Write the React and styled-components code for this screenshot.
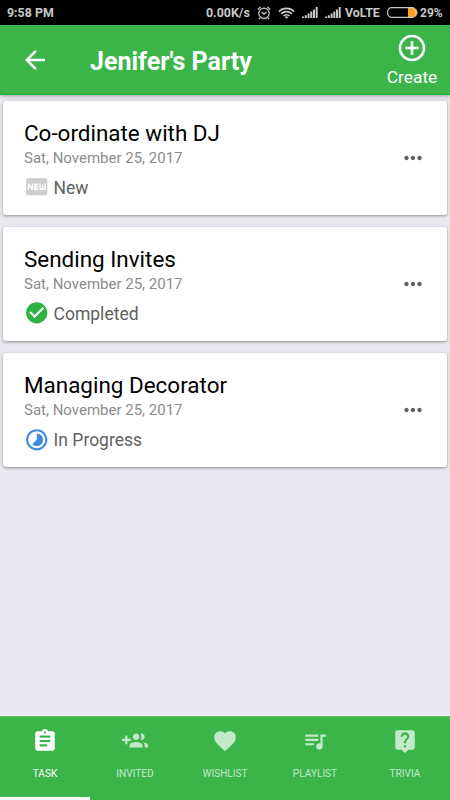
import styled, { createGlobalStyle } from "styled-components";
import {
    MdArrowBack,
    MdAddCircleOutline,
    MdMoreHoriz,
    MdFiberNew,
    MdCheckCircle,
    MdTimelapse,
    MdAssignment,
    MdFavorite,
    MdQueueMusic,
    MdLiveHelp,
} from "react-icons/md";

const GroupAddIcon = ({ size }) => (
    <svg width={size} height={size} viewBox="0 0 24 24" fill="currentColor">
        <path d="M8 10H5V7H3v3H0v2h3v3h2v-3h3v-2zm10 1c1.66 0 2.99-1.34 2.99-3S19.66 5 18 5c-.32 0-.63.05-.91.14.57.81.9 1.79.9 2.86s-.34 2.04-.9 2.86c.28.09.59.14.91.14zm-5 0c1.66 0 2.99-1.34 2.99-3S14.66 5 13 5c-1.66 0-3 1.34-3 3s1.34 3 3 3zm6.62 2.16c.83.73 1.38 1.66 1.38 2.84v2h3v-2c0-1.54-2.37-2.49-4.38-2.84zM13 13c-2 0-6 1-6 3v2h12v-2c0-2-4-3-6-3z" />
    </svg>
);

const AlarmIcon = () => (
    <svg width="14" height="14" viewBox="0 0 14 14" fill="none" stroke="currentColor" strokeWidth="1.3">
        <circle cx="7" cy="7.3" r="5.2" />
        <path d="M.7 3.4 3.6.9M13.3 3.4 10.4.9M4.7 6 7 8.1 9.4 6M3 11.8l-1 1.3M11 11.8l1 1.3" />
    </svg>
);

const WifiIcon = () => (
    <svg width="17" height="12" viewBox="0 0 17 12" fill="none" stroke="currentColor" strokeWidth="1.7">
        <path d="M.8 4.5a10.9 10.9 0 0 1 15.4 0M3.2 6.8a7.5 7.5 0 0 1 10.6 0M5.5 9a4.2 4.2 0 0 1 6 0" />
        <path d="M8.5 11.8 6.7 10a2.6 2.6 0 0 1 3.6 0z" fill="currentColor" stroke="none" />
    </svg>
);

const SignalIcon = () => (
    <svg width="16" height="11" viewBox="0 0 16 11" fill="currentColor">
        <path d="M0 9.5h2V11H0zM2.8 8.3h2V11h-2zM5.6 6.5h2V11h-2zM8.3 4.5h2V11h-2zM11 2.4h2V11h-2zM13.7 0h2v11h-2z" />
    </svg>
);

const BatteryIcon = () => (
    <svg width="31" height="11" viewBox="0 0 31 11">
        <path d="M21 1h5a4.5 4.5 0 0 1 0 9h-5z" fill="#ff9f1c" />
        <rect x=".7" y=".7" width="28.2" height="9.6" rx="3.8" fill="none" stroke="#c8c8c8" strokeWidth="1.2" />
        <path d="M29.5 3.5c1 .5 1 3.5 0 4z" fill="#c8c8c8" />
    </svg>
);

const tasks = [
    { title: "Co-ordinate with DJ", date: "Sat, November 25, 2017", status: "New", icon: MdFiberNew, color: "#cecece" },
    { title: "Sending Invites", date: "Sat, November 25, 2017", status: "Completed", icon: MdCheckCircle, color: "#2fb344" },
    { title: "Managing Decorator", date: "Sat, November 25, 2017", status: "In Progress", icon: MdTimelapse, color: "#3d8ae2" },
];

const tabs = [
    { label: "TASK", icon: MdAssignment, active: true },
    { label: "INVITED", icon: GroupAddIcon },
    { label: "WISHLIST", icon: MdFavorite },
    { label: "PLAYLIST", icon: MdQueueMusic },
    { label: "TRIVIA", icon: MdLiveHelp },
];

const App = () => {
    return (
        <Wrapper>
            <GlobalStyle />
            <StatusBar>
                <Clock>9:58 PM</Clock>
                <Speed>0.00K/s</Speed>
                <StatusIcons>
                    <AlarmIcon />
                    <WifiIcon />
                    <SignalIcon />
                    <SignalIcon />
                </StatusIcons>
                <Volte>VoLTE</Volte>
                <BatteryIcon />
                <Percent>29%</Percent>
            </StatusBar>
            <Header>
                <BackButton aria-label="Back">
                    <MdArrowBack size={30} />
                </BackButton>
                <Title>Jenifer's Party</Title>
                <CreateButton>
                    <MdAddCircleOutline size={32} />
                    <span>Create</span>
                </CreateButton>
            </Header>
            <List>
                {tasks.map(({ title, date, status, icon: Icon, color }) => (
                    <Card key={title}>
                        <div>
                            <TaskTitle>{title}</TaskTitle>
                            <TaskDate>{date}</TaskDate>
                            <Status $color={color}>
                                <Icon size={25.5} />
                                <span>{status}</span>
                            </Status>
                        </div>
                        <MoreButton aria-label="More">
                            <MdMoreHoriz size={26} />
                        </MoreButton>
                    </Card>
                ))}
            </List>
            <TabBar>
                {tabs.map(({ label, icon: Icon, active }) => (
                    <Tab key={label} $active={active}>
                        <Icon size={26} />
                        <TabLabel>{label}</TabLabel>
                    </Tab>
                ))}
            </TabBar>
        </Wrapper>
    );
};

const GlobalStyle = createGlobalStyle`
    body {
        margin: 0;
    }
    * {
        box-sizing: border-box;
    }
    button {
        border: none;
        background: none;
        padding: 0;
        color: inherit;
        font-family: inherit;
    }
    svg {
        display: block;
        flex-shrink: 0;
    }
`
const Wrapper = styled.div`
    display: flex;
    flex-direction: column;
    height: 100vh;
    overflow: hidden;
    background-color: #e8e8ee;
    font-family: Roboto, "Liberation Sans", sans-serif;
    white-space: nowrap;
`
const StatusBar = styled.div`
    display: flex;
    align-items: center;
    flex-shrink: 0;
    height: 25px;
    padding-left: 7px;
    background-color: black;
    color: #c8c8c8;
    font-size: 12.4px;
    font-weight: 700;
`
const Clock = styled.span`
    width: 199px;
`
const Speed = styled.span`
    width: 51px;
`
const StatusIcons = styled.div`
    display: flex;
    align-items: center;
    gap: 7px;
    width: 88px;
`
const Volte = styled.span`
    width: 41.5px;
`
const Percent = styled.span`
    margin-left: 2.5px;
    font-size: 12px;
`
const Header = styled.header`
    display: flex;
    align-items: center;
    flex-shrink: 0;
    height: 70px;
    padding-left: 20px;
    background-color: #3bb54a;
    border-bottom: 1px solid #0fb02e;
    box-shadow: 0 1px 4px rgba(0, 0, 0, 0.3);
    color: white;
`
const BackButton = styled.button`
    width: 70px;
`
const Title = styled.h1`
    flex: 1;
    margin: 5px 0 0;
    font-size: 25px;
    line-height: 30px;
    font-weight: 700;
`
const CreateButton = styled.button`
    display: flex;
    flex-direction: column;
    align-items: center;
    width: 76px;
    font-size: 17.4px;
    line-height: 22px;
    gap: 2px;
`
const List = styled.main`
    display: flex;
    flex-direction: column;
    flex: 1;
    gap: 12.2px;
    padding: 6px 2.6px 0;
`
const Card = styled.article`
    display: flex;
    justify-content: space-between;
    height: 114px;
    padding: 18px 21.4px 0;
    background-color: white;
    border-radius: 3px;
    box-shadow: 0 1px 3px rgba(0, 0, 0, 0.4);
`
const TaskTitle = styled.h2`
    margin: 0;
    font-size: 22.45px;
    line-height: 28px;
    font-weight: 400;
    color: black;
`
const TaskDate = styled.div`
    font-size: 15px;
    line-height: 22px;
    color: #8c8c8c;
`
const Status = styled.div`
    display: flex;
    align-items: center;
    gap: 3.6px;
    margin-top: 6px;
    font-size: 17.5px;
    line-height: 26px;
    color: #5f5f5f;
    svg {
        margin: -2px 0 0 0.5px;
        color: ${(props) => props.$color};
    }
`
const MoreButton = styled.button`
    align-self: flex-start;
    margin-top: 26px;
    color: #606060;
`
const TabBar = styled.nav`
    display: flex;
    flex-shrink: 0;
    height: 84px;
    background-color: #3bb54a;
    border-top: 1px solid #62c06d;
`
const Tab = styled.button`
    display: flex;
    flex-direction: column;
    align-items: center;
    flex: 1;
    padding-top: 11px;
    color: ${(props) => (props.$active ? "white" : "#c4e9c9")};
    border-bottom: 3px solid ${(props) => (props.$active ? "white" : "transparent")};
`
const TabLabel = styled.span`
    margin-top: 13px;
    font-size: 10.1px;
    line-height: 14px;
`
export default App;
